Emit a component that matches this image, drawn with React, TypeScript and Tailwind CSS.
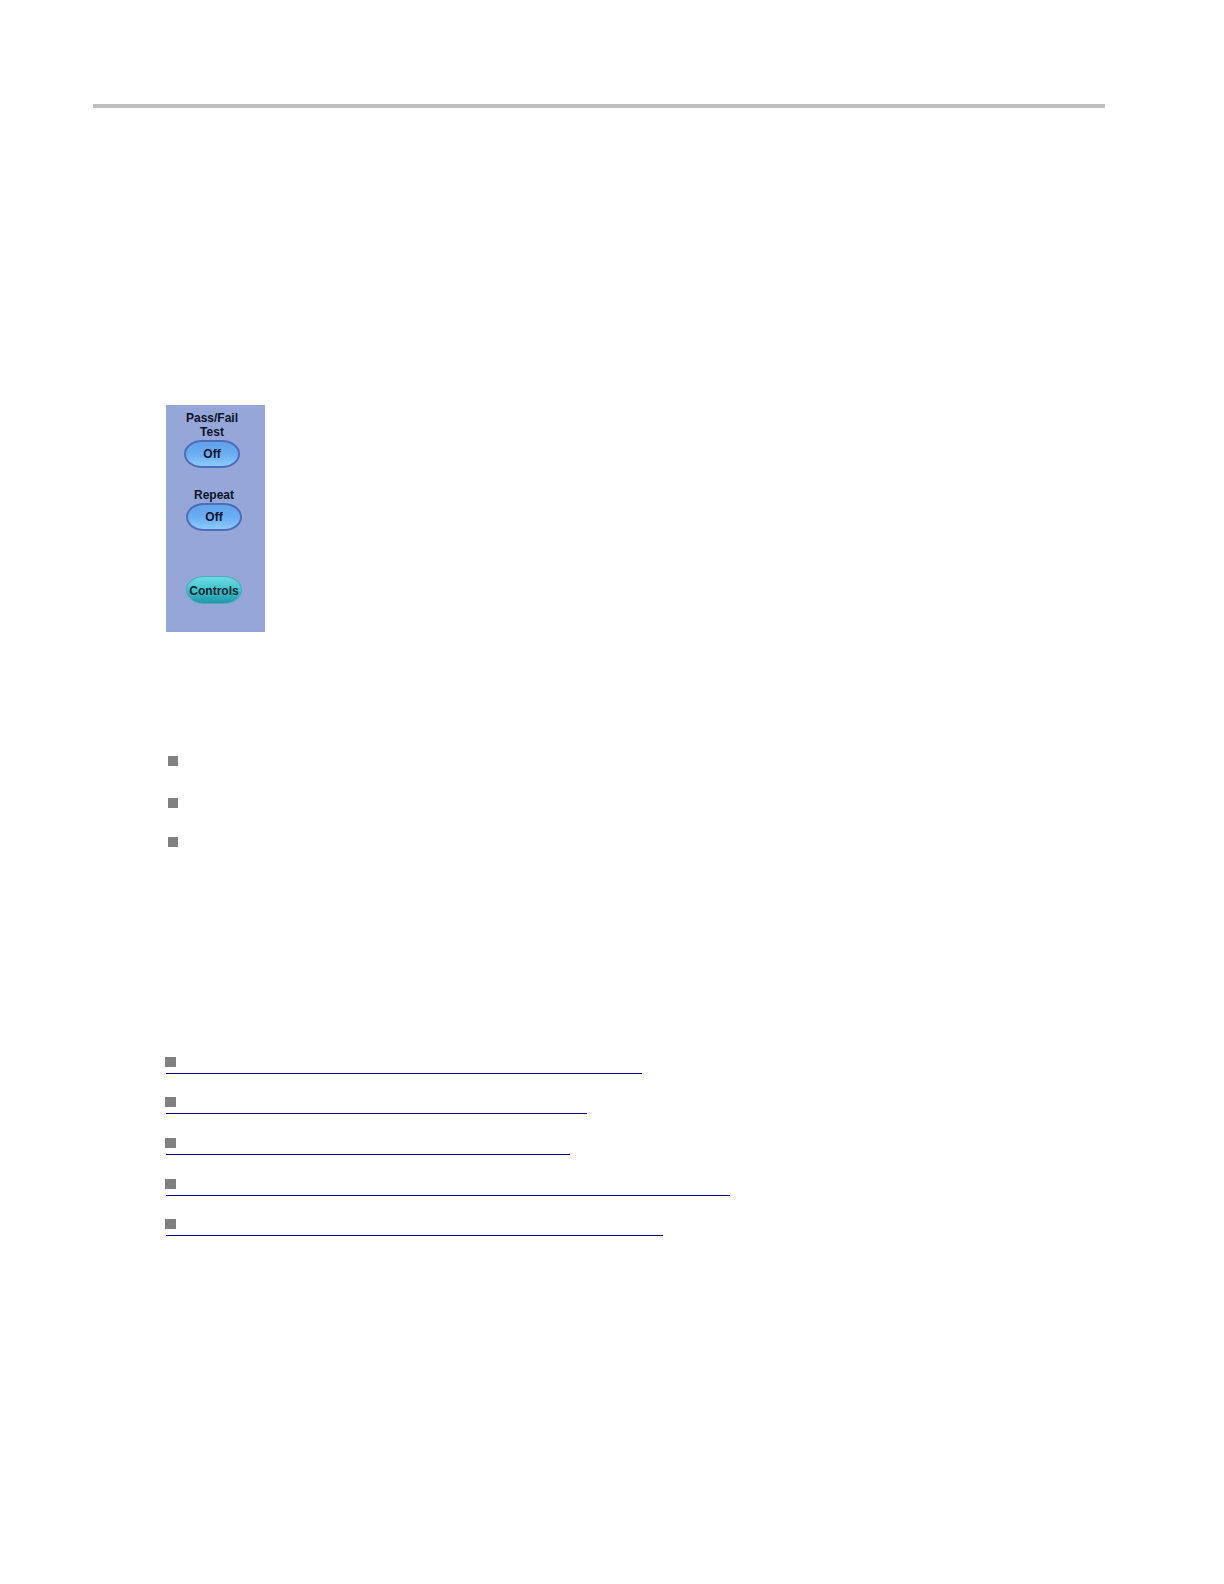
const notes = ["h-[42px]", "h-[39px]", "h-[11px]"];

const topics = [
  { label: "Topic 1", row: "h-[18px]", width: "w-[476px]" },
  { label: "Topic 2", row: "h-10", width: "w-[421px]" },
  { label: "Topic 3", row: "h-[41px]", width: "w-[404px]" },
  { label: "Topic 4", row: "h-[41px]", width: "w-[564px]" },
  { label: "Topic 5", row: "h-10", width: "w-[497px]" },
];

function ToggleButton({ id, labelId }: { id: string; labelId: string }) {
  return (
    <button
      type="button"
      id={id}
      aria-labelledby={`${labelId} ${id}`}
      className="h-7 w-14 rounded-[18px/14px] border-2 border-[#4e6cba] bg-linear-to-b from-[#62a3ea] via-[#69adf3] to-[#8ccbfb] text-center text-xs leading-6 font-bold text-[#0c1426]"
    >
      Off
    </button>
  );
}

function ControlPanel() {
  return (
    <section
      aria-label="Mask test"
      className="flex w-[99px] flex-col items-start bg-[#95a6d9] pt-[6px] pb-7 text-center text-xs leading-[14px] font-bold text-[#0c1426] shadow-[inset_0_0_1px_#8594c8]"
    >
      <div className="ml-[18px] flex flex-col items-center gap-px">
        <span id="pass-label">
          Pass/Fail
          <br />
          Test
        </span>
        <ToggleButton id="pass-toggle" labelId="pass-label" />
      </div>
      <div className="mt-5 ml-5 flex flex-col items-center gap-px">
        <span id="repeat-label">Repeat</span>
        <ToggleButton id="repeat-toggle" labelId="repeat-label" />
      </div>
      <button
        type="button"
        className="mt-[45px] ml-5 flex h-7 w-14 items-center justify-center rounded-[18px/14px] border border-[#4fa9c0] bg-linear-to-b from-[#6adbe3] via-[#3fc3cf] to-[#1f98a4] pt-[2px] whitespace-nowrap text-[#06222b]"
      >
        Controls
      </button>
    </section>
  );
}

export default function App() {
  return (
    <main className="min-h-screen bg-white pt-[104px] pr-[119px] pb-16 pl-[93px] font-['Liberation_Sans',Arial,sans-serif]">
      <hr className="h-1 border-0 bg-[#c0c0c0]" />
      <div className="pt-[297px] pl-[73px]">
        <ControlPanel />
        <ul className="mt-[124px] pl-[2px]">
          {notes.map((row) => (
            <li key={row} className={row}>
              <span className="block size-[10px] bg-[#808080]" />
            </li>
          ))}
        </ul>
        <nav aria-label="Related topics" className="mt-52">
          <ul>
            {topics.map((topic) => (
              <li key={topic.label} className={`flex ${topic.row}`}>
                <a
                  href="#"
                  aria-label={topic.label}
                  className={`flex max-w-full items-end border-b border-[#000099] pb-[6px] ${topic.width}`}
                >
                  <span className="-ml-px block h-[10px] w-[11px] bg-[#808080]" />
                </a>
              </li>
            ))}
          </ul>
        </nav>
      </div>
    </main>
  );
}
